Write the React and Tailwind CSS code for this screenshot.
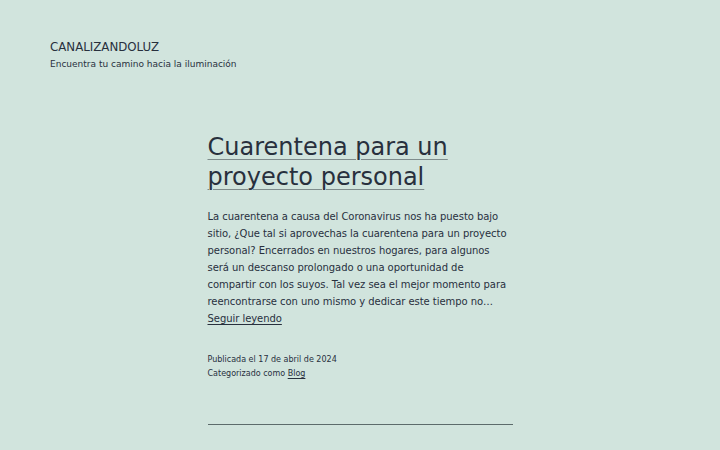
import React from "react";

const font = { fontFamily: '"DejaVu Sans", sans-serif' };

export default function App() {
  return (
    <div
      className="min-h-[450px] w-full bg-[#d1e4dd] text-[#28303d]"
      style={font}
    >
      <header className="px-[50px] pt-[39px]">
        <p className="text-[11.8px] leading-[17px] uppercase">
          Canalizandoluz
        </p>
        <p className="mt-[1px] text-[9px] leading-[14px]">
          Encuentra tu camino hacia la iluminación
        </p>
      </header>

      <main className="mx-auto w-[305px] pt-[61px]">
        <h2 className="text-[24px] leading-[30px]">
          <a
            href="#"
            className="underline decoration-1 decoration-[#7f8c8c] underline-offset-[4px]"
          >
            Cuarentena para un proyecto personal
          </a>
        </h2>

        <p className="mt-[16px] text-[10px] leading-[17px] tracking-[-0.05px]">
          La cuarentena a causa del Coronavirus nos ha puesto bajo sitio, ¿Que
          tal si aprovechas la cuarentena para un proyecto personal? Encerrados
          en nuestros hogares, para algunos será un descanso prolongado o una
          oportunidad de compartir con los suyos. Tal vez sea el mejor momento
          para reencontrarse con uno mismo y dedicar este tiempo no…{" "}
          <a href="#" className="underline decoration-1 underline-offset-2">
            Seguir leyendo
          </a>
        </p>

        <div className="mt-[26px] text-[8px] leading-[14px]">
          <p>Publicada el 17 de abril de 2024</p>
          <p>
            Categorizado como{" "}
            <a href="#" className="underline decoration-1 underline-offset-2">
              Blog
            </a>
          </p>
        </div>

        <hr className="mt-[43px] border-t border-[#5c6b6b]" />
      </main>
    </div>
  );
}
